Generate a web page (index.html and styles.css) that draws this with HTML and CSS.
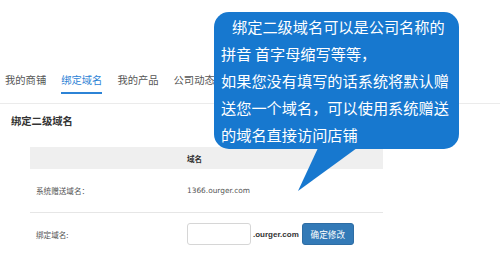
FILE: index.html
```html
<!DOCTYPE html>
<html lang="zh-CN">
<head>
<meta charset="utf-8">
<title>绑定二级域名</title>
<link rel="stylesheet" href="styles.css">
</head>
<body>
<div class="main">
  <nav class="tabs">
    <span class="tab">我的商铺</span>
    <span class="tab active">绑定域名</span>
    <span class="tab">我的产品</span>
    <span class="tab">公司动态</span>
  </nav>
  <h3 class="title">绑定二级域名</h3>
  <div class="table">
    <div class="row head">
      <div class="cell"></div>
      <div class="cell">域名</div>
    </div>
    <div class="row line">
      <div class="cell label">系统赠送域名：</div>
      <div class="cell value">1366.ourger.com</div>
    </div>
    <div class="row form">
      <div class="cell label">绑定域名:</div>
      <div class="cell controls">
        <input class="input" type="text">
        <span class="suffix">.ourger.com</span>
        <button class="btn">确定修改</button>
      </div>
    </div>
  </div>
</div>
<div class="bubble">
  <p class="bubble-text"><span class="first">绑定二级域名可以是公司名称的</span><br>拼音 首字母缩写等等，<br>如果您没有填写的话系统将默认赠<br>送您一个域名，可以使用系统赠送<br>的域名直接访问店铺</p>
  <svg class="tail" width="70" height="56" viewBox="0 0 70 56"><polygon points="24,0 63,0 4,43" fill="#1778cf"/></svg>
</div>
</body>
</html>
```
FILE: styles.css
```css
html, body {
  margin: 0;
  padding: 0;
  background: #ffffff;
}
body {
  width: 500px;
  height: 266px;
  overflow: hidden;
  position: relative;
  font-family: "Liberation Sans", "Noto Sans CJK SC", sans-serif;
  color: #444;
}
.main {
  padding-top: 73px;
}
.tabs {
  display: flex;
  align-items: flex-start;
  gap: 15px;
  padding: 0 0 9px 5px;
  border-bottom: 1px solid #ebebeb;
}
.tab {
  font-family: "Noto Sans CJK SC", sans-serif;
  font-size: 10.3px;
  line-height: 14px;
  color: #555;
  padding-bottom: 5px;
  border-bottom: 2px solid transparent;
}
.tab.active {
  color: #2c83d6;
  border-bottom-color: #2c83d6;
}
.title {
  margin: 10px 0 0 11px;
  font-family: "Noto Sans CJK SC", sans-serif;
  font-size: 10.3px;
  line-height: 14px;
  font-weight: 700;
  color: #333;
}
.table {
  margin: 19px 0 0 30px;
  width: 353px;
}
.row {
  display: grid;
  grid-template-columns: 157px 1fr;
  align-items: center;
}
.row.head {
  height: 22px;
  background: #efefef;
  font-family: "Noto Sans CJK SC", sans-serif;
  font-size: 7.6px;
  font-weight: 700;
  color: #333;
}
.row.line {
  height: 43px;
  border-bottom: 1px solid #e6e6e6;
}
.row.form {
  padding-top: 10px;
}
.label {
  padding-left: 6px;
  font-family: "Noto Sans CJK SC", sans-serif;
  font-size: 7.6px;
  color: #555;
}
.value {
  font-family: "DejaVu Sans", "Liberation Sans", sans-serif;
  font-size: 7.4px;
  color: #555;
}
.controls {
  display: flex;
  align-items: center;
}
.input {
  box-sizing: border-box;
  width: 64px;
  height: 22px;
  margin: 0;
  border: 1px solid #d6d6d6;
  border-radius: 3px;
  background: #fff;
  padding: 0;
}
.suffix {
  margin-left: 2px;
  font-size: 8px;
  font-weight: 700;
  color: #333;
}
.btn {
  margin-left: 3px;
  box-sizing: border-box;
  width: 52px;
  height: 22px;
  padding: 0;
  border: 1px solid #2e6da4;
  border-radius: 3px;
  background: #337ab7;
  color: #fff;
  font-family: "Noto Sans CJK SC", sans-serif;
  font-size: 8.6px;
}
.bubble {
  position: absolute;
  left: 214px;
  top: 12px;
  width: 245px;
  height: 137px;
  background: #1778cf;
  border-radius: 15px;
}
.bubble-text {
  margin: 0;
  padding: 1px 0 0 7px;
  font-family: "Noto Sans CJK SC", sans-serif;
  font-size: 15.2px;
  line-height: 27px;
  color: #fff;
  white-space: nowrap;
}
.first {
  padding-left: 11px;
}
.tail {
  position: absolute;
  left: 80px;
  top: 136px;
  display: block;
}
```
